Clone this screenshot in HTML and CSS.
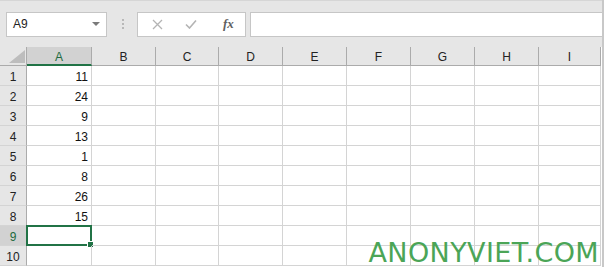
FILE: index.html
```html
<!DOCTYPE html>
<html lang="en">
<head>
    <meta charset="UTF-8">
    <title>Sheet</title>
    <link rel="stylesheet" href="styles.css">
</head>
<body>
<div class="app">
    <div class="toolbar">
        <div class="namebox">
            <span>A9</span>
            <svg class="arrow" width="8" height="4" viewBox="0 0 8 4"><path d="M0 0h8L4 4z" fill="#7a7a7a"/></svg>
        </div>
        <div class="grip"><i></i><i></i><i></i></div>
        <div class="fxbox">
            <svg class="btn" width="11" height="11" viewBox="0 0 11 11"><path d="M1 1l9 9M10 1l-9 9" stroke="#b4b4b4" stroke-width="1.3" fill="none"/></svg>
            <svg class="btn" width="12" height="10" viewBox="0 0 12 10"><path d="M1 5.5l3.5 3.5L11 1.5" stroke="#b4b4b4" stroke-width="1.6" fill="none"/></svg>
            <span class="fx">fx</span>
        </div>
        <div class="formula"></div>
    </div>

    <div class="grid">
        <div class="corner"><svg width="16" height="13" viewBox="0 0 16 13"><path d="M16 0V13H0z" fill="#bdbdbd"/></svg></div>
        <div class="ch sel">A</div>
        <div class="ch">B</div>
        <div class="ch">C</div>
        <div class="ch">D</div>
        <div class="ch">E</div>
        <div class="ch">F</div>
        <div class="ch">G</div>
        <div class="ch">H</div>
        <div class="ch">I</div>

        <div class="rh">1</div><div class="c num">11</div><div class="c"></div><div class="c"></div><div class="c"></div><div class="c"></div><div class="c"></div><div class="c"></div><div class="c"></div><div class="c"></div>
        <div class="rh">2</div><div class="c num">24</div><div class="c"></div><div class="c"></div><div class="c"></div><div class="c"></div><div class="c"></div><div class="c"></div><div class="c"></div><div class="c"></div>
        <div class="rh">3</div><div class="c num">9</div><div class="c"></div><div class="c"></div><div class="c"></div><div class="c"></div><div class="c"></div><div class="c"></div><div class="c"></div><div class="c"></div>
        <div class="rh">4</div><div class="c num">13</div><div class="c"></div><div class="c"></div><div class="c"></div><div class="c"></div><div class="c"></div><div class="c"></div><div class="c"></div><div class="c"></div>
        <div class="rh">5</div><div class="c num">1</div><div class="c"></div><div class="c"></div><div class="c"></div><div class="c"></div><div class="c"></div><div class="c"></div><div class="c"></div><div class="c"></div>
        <div class="rh">6</div><div class="c num">8</div><div class="c"></div><div class="c"></div><div class="c"></div><div class="c"></div><div class="c"></div><div class="c"></div><div class="c"></div><div class="c"></div>
        <div class="rh">7</div><div class="c num">26</div><div class="c"></div><div class="c"></div><div class="c"></div><div class="c"></div><div class="c"></div><div class="c"></div><div class="c"></div><div class="c"></div>
        <div class="rh">8</div><div class="c num">15</div><div class="c"></div><div class="c"></div><div class="c"></div><div class="c"></div><div class="c"></div><div class="c"></div><div class="c"></div><div class="c"></div>
        <div class="rh sel">9</div><div class="c active"><b class="handle"></b></div><div class="c"></div><div class="c"></div><div class="c"></div><div class="c"></div><div class="c"></div><div class="c"></div><div class="c"></div><div class="c"></div>
        <div class="rh">10</div><div class="c"></div><div class="c"></div><div class="c"></div><div class="c"></div><div class="c"></div><div class="c"></div><div class="c"></div><div class="c"></div><div class="c"></div>
    </div>

    <div class="mark">ANONYVIET.COM</div>
</div>
</body>
</html>
```

FILE: styles.css
```css
body {
    margin: 0;
    background: #fff;
}

.app {
    position: relative;
    width: 604px;
    height: 267px;
    font-family: "Liberation Sans", Arial, sans-serif;
    border-right: 2px solid #c8c8c8;
    box-sizing: border-box;
}

.toolbar {
    display: flex;
    align-items: center;
    height: 47px;
    padding-left: 6px;
    background: #e6e6e6;
    border-top: 1px solid #d6d6d6;
    box-sizing: border-box;
}

.namebox {
    display: flex;
    align-items: center;
    justify-content: space-between;
    width: 101px;
    height: 25px;
    padding: 0 6px 0 6px;
    background: #fff;
    border: 1px solid #c6c6c6;
    box-sizing: border-box;
    font-size: 12px;
    color: #222;
}

.grip {
    display: flex;
    flex-direction: column;
    gap: 2px;
    margin: 0 13px 0 15px;
}

.grip i {
    width: 2px;
    height: 2px;
    background: #b8b8b8;
}

.fxbox {
    display: flex;
    align-items: center;
    width: 109px;
    height: 25px;
    padding-left: 14px;
    background: #fff;
    border: 1px solid #c6c6c6;
    box-sizing: border-box;
}

.fxbox .btn {
    margin-right: 22px;
}

.fx {
    margin-left: 4px;
    font-family: "Liberation Serif", serif;
    font-style: italic;
    font-weight: bold;
    font-size: 13px;
    color: #606060;
}

.formula {
    flex: 1;
    height: 25px;
    margin-left: 4px;
    background: #fff;
    border: 1px solid #c6c6c6;
    border-right: none;
    box-sizing: border-box;
}

.grid {
    display: grid;
    grid-template-columns: 27px 65px 64px 63px 64px 64px 64px 64px 64px 62px;
    grid-template-rows: 19px repeat(10, 20px);
    font-size: 11px;
    color: #222;
}

.grid > div {
    box-sizing: border-box;
}

.corner {
    display: flex;
    align-items: flex-end;
    justify-content: flex-end;
    padding: 0 1px 2px 0;
    background: #e6e6e6;
    border-bottom: 1px solid #ababab;
    border-right: 1px solid #ababab;
}

.ch {
    display: flex;
    align-items: center;
    justify-content: center;
    padding-top: 2px;
    background: #e6e6e6;
    border-bottom: 1px solid #ababab;
    border-right: 1px solid #ababab;
    font-size: 12px;
}

.ch.sel {
    background: #d2d2d2;
    color: #1e6b40;
    border-bottom: 2px solid #217346;
}

.rh {
    display: flex;
    align-items: center;
    justify-content: center;
    padding-top: 2px;
    background: #e6e6e6;
    border-bottom: 1px solid #d4d4d4;
    border-right: 1px solid #ababab;
    font-size: 12px;
}

.rh.sel {
    background: #d2d2d2;
    color: #1e6b40;
}

.c {
    position: relative;
    border-bottom: 1px solid #d4d4d4;
    border-right: 1px solid #d4d4d4;
}

.num {
    display: flex;
    align-items: center;
    justify-content: flex-end;
    padding: 3px 3px 0 0;
    font-size: 12px;
    color: #111;
}

.active {
    border: 2px solid #217346;
    margin: -1px 0 0 -1px;
}

.handle {
    position: absolute;
    right: -4px;
    bottom: -4px;
    width: 5px;
    height: 5px;
    background: #217346;
    border: 1px solid #fff;
}

.mark {
    position: absolute;
    right: 3px;
    bottom: 1px;
    font-family: "DejaVu Sans", sans-serif;
    font-size: 27px;
    line-height: 1;
    color: #4ba557;
    letter-spacing: 0.4px;
    white-space: nowrap;
}
```
